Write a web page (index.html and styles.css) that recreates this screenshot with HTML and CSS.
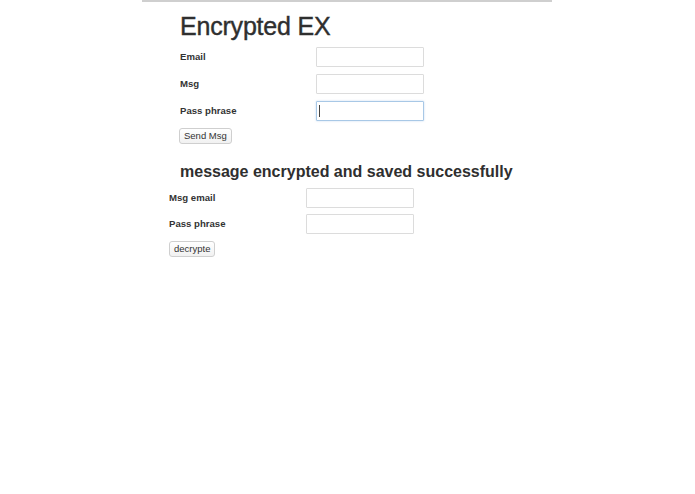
FILE: index.html
```html
<!DOCTYPE html>
<html>
<head>
<meta charset="utf-8">
<title>Encrypted EX</title>
<link rel="stylesheet" href="styles.css">
</head>
<body>
<div class="page">
  <form class="form form-send">
    <h1 class="title">Encrypted EX</h1>
    <div class="rows">
      <div class="row"><label class="label">Email</label><input class="field" type="text"></div>
      <div class="row"><label class="label">Msg</label><input class="field" type="text"></div>
      <div class="row"><label class="label">Pass phrase</label><span class="focus-wrap"><input class="field field-focus" type="text"></span></div>
    </div>
    <button type="button" class="btn">Send Msg</button>
  </form>
  <h2 class="status">message encrypted and saved successfully</h2>
  <form class="form form-decrypt">
    <div class="rows">
      <div class="row"><label class="label">Msg email</label><input class="field" type="text"></div>
      <div class="row"><label class="label">Pass phrase</label><input class="field" type="text"></div>
    </div>
    <button type="button" class="btn">decrypte</button>
  </form>
</div>
</body>
</html>
```
FILE: styles.css
```css
html, body {
  margin: 0;
  padding: 0;
  background: #fff;
}
body {
  font-family: "Liberation Sans", Arial, Helvetica, sans-serif;
  color: #333;
}
.page {
  width: 410px;
  margin-left: 142px;
  border-top: 2px solid #cfcfcf;
}
.form {
  margin: 0;
}
.form-send {
  padding-left: 38px;
}
.form-decrypt {
  padding-left: 27px;
}
.title {
  margin: 10px 0 7px 0;
  font-size: 25px;
  line-height: 28px;
  font-weight: normal;
  color: #2f2f2f;
  letter-spacing: -0.2px;
  -webkit-text-stroke: 0.4px #2f2f2f;
}
.rows {
  display: flex;
  flex-direction: column;
  gap: 7px;
}
.row {
  display: grid;
  grid-template-columns: 136px 108px;
  align-items: center;
}
.form-decrypt .row {
  grid-template-columns: 137px 108px;
}
.label {
  font-size: 9.6px;
  font-weight: bold;
  color: #333;
  line-height: 12px;
}
.field {
  box-sizing: border-box;
  width: 108px;
  height: 20px;
  margin: 0;
  padding: 0 3px;
  border: 1px solid #dcdcdc;
  border-radius: 1px;
  background: #fff;
  font-size: 10px;
  outline: none;
  display: block;
}
.focus-wrap {
  position: relative;
  display: block;
  width: 108px;
}
.field-focus {
  border-color: #a8c8e6;
  box-shadow: 0 0 2px rgba(130, 180, 230, 0.5);
}
.focus-wrap::after {
  content: "";
  position: absolute;
  left: 3px;
  top: 4px;
  width: 1px;
  height: 12px;
  background: #444;
}
.btn {
  display: block;
  box-sizing: border-box;
  margin: 7px 0 0 -1px;
  height: 16px;
  padding: 0 4px;
  border: 1px solid #cfcfcf;
  border-radius: 3px;
  background: linear-gradient(#ffffff, #f1f1f1);
  font-family: "Liberation Sans", Arial, Helvetica, sans-serif;
  font-size: 9.5px;
  line-height: 14px;
  color: #333;
}
.form-decrypt .btn {
  margin-left: 0;
}
.status {
  margin: 18px 0 6px 0;
  padding-left: 38px;
  font-size: 16px;
  line-height: 20px;
  font-weight: bold;
  color: #2f2f2f;
}
.form-decrypt .rows {
  gap: 6px;
}
```
